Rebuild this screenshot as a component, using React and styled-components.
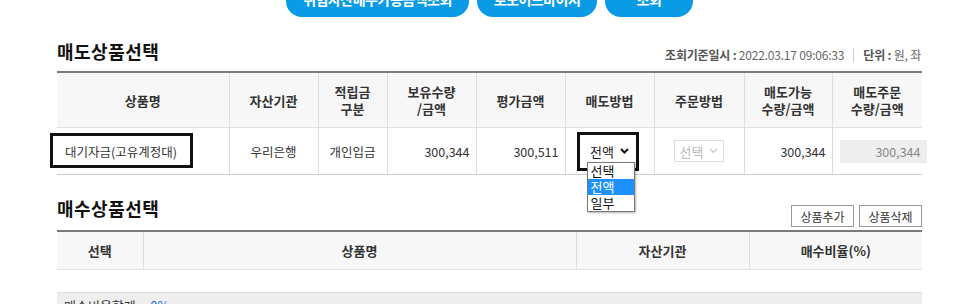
import React from 'react';
import styled, { createGlobalStyle } from 'styled-components';

const GlobalStyle = createGlobalStyle`
  html, body {
    margin: 0;
    padding: 0;
    background: #fff;
    overflow: hidden;
  }
  body {
    font-family: 'Noto Sans CJK KR', 'Noto Sans', sans-serif;
    color: #333;
  }
`;

const Page = styled.div`
  width: 865px;
  margin-left: 57px;
`;

const TopBar = styled.div`
  display: flex;
  justify-content: center;
  gap: 8px;
  margin-top: -20px;
`;

const BlueButton = styled.button`
  width: ${p => p.$w}px;
  height: 37px;
  border: 0;
  border-radius: 16px;
  background: #0a9be6;
  color: #fff;
  font-family: inherit;
  font-size: 14px;
  font-weight: 700;
  letter-spacing: -0.5px;
  padding: 0;
`;

const SectionHead = styled.div`
  display: flex;
  justify-content: space-between;
  align-items: flex-end;
  box-sizing: border-box;
  height: ${p => p.$h}px;
  margin-top: ${p => p.$top}px;
`;

const Title = styled.h2`
  margin: 0 0 ${p => p.$mb || 0}px;
  font-size: 18px;
  line-height: 24px;
  font-weight: 700;
  color: #111;
  letter-spacing: 0.5px;
`;

const Meta = styled.div`
  display: flex;
  align-items: center;
  font-size: 12px;
  line-height: 16px;
  color: #666;
  letter-spacing: -0.2px;
  margin: 0 1px 8px 0;
`;

const MetaLabel = styled.span`
  font-weight: 700;
  color: #555;
`;

const MetaSep = styled.span`
  width: 1px;
  height: 14px;
  background: #ccc;
  margin: 0 9px;
`;

const Table = styled.table`
  width: 100%;
  table-layout: fixed;
  border-collapse: collapse;
  border-top: 2px solid #7a7a7a;
`;

const Th = styled.th`
  height: ${p => p.$h}px;
  padding: 0;
  background: #f7f7f7;
  border-left: 1px solid #ddd;
  border-bottom: 1px solid #e2e2e2;
  font-size: 13px;
  line-height: 17px;
  font-weight: 700;
  color: #333;
  text-align: center;
  &:first-child {
    border-left: 0;
  }
`;

const Td = styled.td`
  position: relative;
  height: 46px;
  padding: 0 ${p => (p.$align === 'right' ? 6 : 8)}px;
  border-left: 1px solid #ddd;
  border-bottom: 1px solid #ccc;
  font-size: 12.5px;
  color: #333;
  text-align: ${p => p.$align || 'center'};
  &:first-child {
    border-left: 0;
  }
`;

const Highlight = styled.div`
  position: absolute;
  left: ${p => p.$l}px;
  top: ${p => p.$t}px;
  width: ${p => p.$w}px;
  height: ${p => p.$h}px;
  border: 3px solid #111;
  box-sizing: border-box;
  pointer-events: none;
`;

const SelectBox = styled.div`
  display: inline-flex;
  align-items: center;
  gap: 6px;
  height: 22px;
  padding: 0 5px;
  box-sizing: border-box;
  border: 1px solid ${p => (p.$disabled ? '#ddd' : 'transparent')};
  color: ${p => (p.$disabled ? '#bbb' : '#222')};
  font-size: 13px;
`;

const OptionList = styled.ul`
  position: absolute;
  left: 21px;
  top: 34px;
  width: 46px;
  margin: 0;
  padding: 0;
  list-style: none;
  background: #fff;
  border: 1px solid #777;
  box-shadow: 1px 1px 2px rgba(0, 0, 0, 0.3);
  text-align: left;
  z-index: 2;
`;

const Option = styled.li`
  height: 16px;
  line-height: 16px;
  padding-left: 3px;
  font-size: 13px;
  background: ${p => (p.$active ? '#1e90ff' : '#fff')};
  color: ${p => (p.$active ? '#fff' : '#111')};
`;

const ReadOnlyInput = styled.div`
  width: 87px;
  height: 23px;
  line-height: 23px;
  box-sizing: border-box;
  padding-right: 6px;
  margin-left: 7px;
  background: #eee;
  color: #888;
  text-align: right;
  font-size: 12.5px;
`;

const SmallButtons = styled.div`
  display: flex;
  gap: 5px;
  margin-bottom: 3px;
`;

const SmallButton = styled.button`
  width: 63px;
  height: 22px;
  padding: 0;
  border: 1px solid #999;
  background: #fff;
  font-family: inherit;
  font-size: 12px;
  color: #333;
`;

const EmptyRow = styled.div`
  height: 22px;
`;

const SumRow = styled.div`
  height: 30px;
  border-top: 1px solid #ddd;
  background: #eee;
  padding: 4px 7px;
  box-sizing: border-box;
  font-size: 13px;
  line-height: 18px;
  color: #333;
`;

const Percent = styled.span`
  color: #1a73e8;
  margin-left: 8px;
`;

const Chevron = ({ disabled }) => (
  <svg width="9" height="6" viewBox="0 0 9 6">
    <path
      d="M1 1l3.5 3.5L8 1"
      fill="none"
      stroke={disabled ? '#c4c4c4' : '#111'}
      strokeWidth={disabled ? 1.2 : 2}
    />
  </svg>
);

export default function App() {
  return (
    <Page>
      <GlobalStyle />
      <TopBar>
        <BlueButton $w={183}>위험자산매수가능금액조회</BlueButton>
        <BlueButton $w={120}>로보어드바이저</BlueButton>
        <BlueButton $w={88}>조회</BlueButton>
      </TopBar>

      <SectionHead $h={54} $top={0}>
        <Title $mb={8}>매도상품선택</Title>
        <Meta>
          <MetaLabel>조회기준일시 :</MetaLabel>&nbsp;2022.03.17 09:06:33
          <MetaSep />
          <MetaLabel>단위 :</MetaLabel>&nbsp;원, 좌
        </Meta>
      </SectionHead>

      <Table>
        <colgroup>
          <col style={{ width: 172 }} />
          <col style={{ width: 89 }} />
          <col style={{ width: 69 }} />
          <col style={{ width: 89 }} />
          <col style={{ width: 89 }} />
          <col style={{ width: 89 }} />
          <col style={{ width: 90 }} />
          <col style={{ width: 88 }} />
          <col />
        </colgroup>
        <thead>
          <tr>
            <Th $h={54}>상품명</Th>
            <Th $h={54}>자산기관</Th>
            <Th $h={54}>적립금<br />구분</Th>
            <Th $h={54}>보유수량<br />/금액</Th>
            <Th $h={54}>평가금액</Th>
            <Th $h={54}>매도방법</Th>
            <Th $h={54}>주문방법</Th>
            <Th $h={54}>매도가능<br />수량/금액</Th>
            <Th $h={54}>매도주문<br />수량/금액</Th>
          </tr>
        </thead>
        <tbody>
          <tr>
            <Td $align="left">
              대기자금(고유계정대)
              <Highlight $l={-7} $t={5} $w={143} $h={35} />
            </Td>
            <Td>우리은행</Td>
            <Td>개인입금</Td>
            <Td $align="right">300,344</Td>
            <Td $align="right">300,511</Td>
            <Td>
              <SelectBox>
                전액 <Chevron />
              </SelectBox>
              <Highlight $l={11} $t={4} $w={62} $h={39} />
              <OptionList>
                <Option>선택</Option>
                <Option $active>전액</Option>
                <Option>일부</Option>
              </OptionList>
            </Td>
            <Td>
              <SelectBox $disabled>
                선택 <Chevron disabled />
              </SelectBox>
            </Td>
            <Td $align="right">300,344</Td>
            <Td $align="right" style={{ padding: 0 }}>
              <ReadOnlyInput>300,344</ReadOnlyInput>
            </Td>
          </tr>
        </tbody>
      </Table>

      <SectionHead $h={34} $top={21}>
        <Title $mb={10}>매수상품선택</Title>
        <SmallButtons>
          <SmallButton>상품추가</SmallButton>
          <SmallButton>상품삭제</SmallButton>
        </SmallButtons>
      </SectionHead>

      <Table>
        <colgroup>
          <col style={{ width: 86 }} />
          <col style={{ width: 433 }} />
          <col style={{ width: 173 }} />
          <col />
        </colgroup>
        <thead>
          <tr>
            <Th $h={37}>선택</Th>
            <Th $h={37}>상품명</Th>
            <Th $h={37}>자산기관</Th>
            <Th $h={37}>매수비율(%)</Th>
          </tr>
        </thead>
      </Table>
      <EmptyRow />
      <SumRow>
        매수비율합계 :<Percent>0%</Percent>
      </SumRow>
    </Page>
  );
}
